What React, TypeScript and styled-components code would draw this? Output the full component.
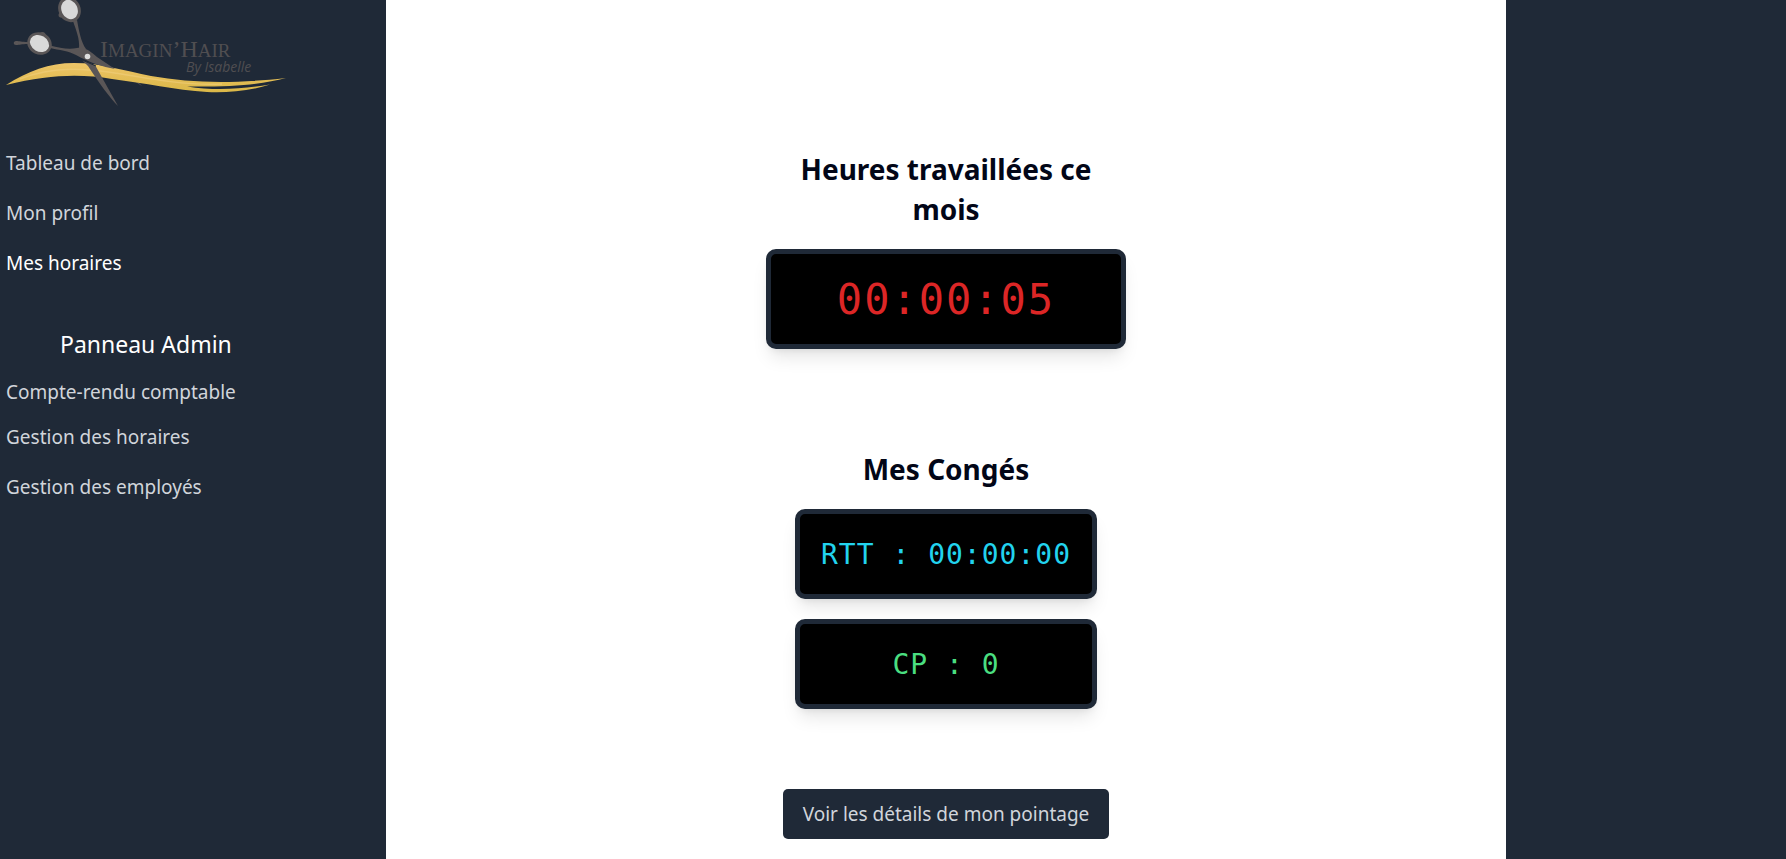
import React from "react";
import styled, { createGlobalStyle } from "styled-components";

const navy = "#1f2937";
const sans = `"Noto Sans", "Open Sans", sans-serif`;

const GlobalStyle = createGlobalStyle`
  *, *::before, *::after { box-sizing: border-box; }
  body { margin: 0; background: #ffffff; color: #020617; font-family: ${sans}; }
`;

const Page = styled.div`
  display: flex;
  min-height: 100vh;
`;

const Sidebar = styled.aside`
  flex: 0 0 386px;
  background: ${navy};
`;

const Rail = styled.aside`
  flex: 0 0 280px;
  background: ${navy};
`;

const LogoLink = styled.a`
  display: block;
  svg { display: block; }
`;

const NavList = styled.ul<{ $top: number }>`
  list-style: none;
  margin: 0;
  padding: ${(p) => p.$top}px 6px 0;
`;

const NavItem = styled.li<{ $compact?: boolean }>`
  display: flex;
  align-items: center;
  height: ${(p) => (p.$compact ? 40 : 50)}px;
`;

const NavLink = styled.a<{ $active?: boolean }>`
  font-size: 19px;
  line-height: 30px;
  color: ${(p) => (p.$active ? "#ffffff" : "#d1d5db")};
  text-decoration: none;
`;

const NavTitle = styled.h2`
  margin: 36px 0 0;
  padding-left: 60px;
  font-size: 23px;
  line-height: 40px;
  font-weight: 400;
  color: #ffffff;
`;

const Main = styled.main`
  flex: 1;
  display: flex;
  flex-direction: column;
  align-items: center;
  padding: 149px 20px 20px;
`;

const Block = styled.section<{ $gap: number }>`
  display: flex;
  flex-direction: column;
  align-items: center;
  gap: 20px;
  width: 360px;
  margin-bottom: ${(p) => p.$gap}px;
`;

const Heading = styled.h1`
  margin: 0;
  padding: 0 20px;
  font-size: 28px;
  line-height: 40px;
  font-weight: 700;
  text-align: center;
`;

const Display = styled.div<{ $color: string; $large?: boolean }>`
  display: flex;
  align-items: center;
  justify-content: center;
  width: ${(p) => (p.$large ? "100%" : "302px")};
  height: ${(p) => (p.$large ? 100 : 90)}px;
  border: 5px solid ${navy};
  border-radius: 10px;
  background: #000000;
  box-shadow: 0 12px 18px -4px rgba(0, 0, 0, 0.1), 0 5px 8px -5px rgba(0, 0, 0, 0.1);
  color: ${(p) => p.$color};
  font-family: "DejaVu Sans Mono", monospace;
  font-size: ${(p) => (p.$large ? 42 : 28)}px;
  letter-spacing: ${(p) => (p.$large ? 2 : 1)}px;
  white-space: pre;
`;

const DetailsButton = styled.button`
  height: 50px;
  padding: 0 20px;
  border: 0;
  border-radius: 5px;
  background: ${navy};
  color: #d1d5db;
  font-family: ${sans};
  font-size: 19px;
  line-height: 30px;
  cursor: pointer;
`;

function Logo() {
  return (
    <svg width="300" height="120" viewBox="0 0 300 120" role="img" aria-label="Imagin'Hair By Isabelle">
      <defs>
        <linearGradient id="gold" x1="0" y1="0" x2="0" y2="1">
          <stop offset="0" stopColor="#edc569" />
          <stop offset="0.45" stopColor="#e5be58" />
          <stop offset="1" stopColor="#dab848" />
        </linearGradient>
      </defs>
      <path d="M134 81 L142 86 L139 83Z" fill="#5a5657" />
      <path
        d="M6 85 C28 71 49 63 74 63 C101 63 125 71 151 76 C191 83 232 84 286 78 C264 84 235 87 187 86.5 C216 91 243 89 270 84.5 C250 91 226 93 207 92 C175 90 145 83 112 79 C82 74 50 74 6 85Z"
        fill="url(#gold)"
      />
      <path d="M20 79 C55 65 88 69 115 73 C150 79 190 86 222 84" fill="none" stroke="#f0ce7d" strokeWidth="1.5" opacity="0.6" />
      <g fill="#5a5657">
        <path d="M16 41 C13 41 13 45 16 45 C20 45 21 44 28 44 L28 42 C21 42 20 41 16 41Z" />
        <ellipse cx="39.5" cy="43.5" rx="12.5" ry="11" transform="rotate(25 39.5 43.5)" />
        <path d="M40 33 C42 31 46 32 46 36Z" />
        <ellipse cx="69.5" cy="9.5" rx="11" ry="13" transform="rotate(-25 69.5 9.5)" />
        <path d="M60 12 C57 15 59 19 63 17Z" />
        <path d="M50 45.5 C60 48 69 50 77 48 C85 47 90 51 97 57 L115 69 C103 67 88 62 76 55 C69 51 59 50 50 48Z" />
        <path d="M73 21 L77 20 C79 31 81 42 86 49 L79 49 C80 39 76 30 73 21Z" />
        <path d="M82 60 L95 65 L118 106 C110 98 99 83 88 66Z" />
      </g>
      <path d="M82 60 L96 66" stroke={navy} strokeWidth="1" />
      <ellipse cx="39.5" cy="43.5" rx="10" ry="8" transform="rotate(30 39.5 43.5)" fill="#d9d9d9" />
      <ellipse cx="69.5" cy="9.5" rx="8" ry="10" transform="rotate(-25 69.5 9.5)" fill="#d9d9d9" />
      <circle cx="87.5" cy="56.5" r="2.8" fill="#dddddd" />
      <text x="100" y="57" fontSize="24" fill="#504e51" fontFamily='"Liberation Serif", serif'>
        I<tspan fontSize="19">MAGIN</tspan>’H<tspan fontSize="19">AIR</tspan>
      </text>
      <text x="186" y="72" fontSize="14" fontFamily='"Open Sans", sans-serif' fontStyle="italic" fill="#504e51">
        By Isabelle
      </text>
    </svg>
  );
}

export default function App() {
  return (
    <>
      <GlobalStyle />
      <Page>
        <Sidebar>
          <LogoLink href="#">
            <Logo />
          </LogoLink>
          <nav>
            <NavList $top={18}>
              <NavItem><NavLink href="#">Tableau de bord</NavLink></NavItem>
              <NavItem><NavLink href="#">Mon profil</NavLink></NavItem>
              <NavItem><NavLink href="#" $active>Mes horaires</NavLink></NavItem>
            </NavList>
            <NavTitle>Panneau Admin</NavTitle>
            <NavList $top={8}>
              <NavItem $compact><NavLink href="#">Compte-rendu comptable</NavLink></NavItem>
              <NavItem><NavLink href="#">Gestion des horaires</NavLink></NavItem>
              <NavItem><NavLink href="#">Gestion des employés</NavLink></NavItem>
            </NavList>
          </nav>
        </Sidebar>
        <Main>
          <Block $gap={100}>
            <Heading>Heures travaillées ce mois</Heading>
            <Display $color="#dc2626" $large>00:00:05</Display>
          </Block>
          <Block $gap={80}>
            <Heading>Mes Congés</Heading>
            <Display $color="#22d3ee">RTT : 00:00:00</Display>
            <Display $color="#4ade80">CP : 0</Display>
          </Block>
          <DetailsButton type="button">Voir les détails de mon pointage</DetailsButton>
        </Main>
        <Rail />
      </Page>
    </>
  );
}
